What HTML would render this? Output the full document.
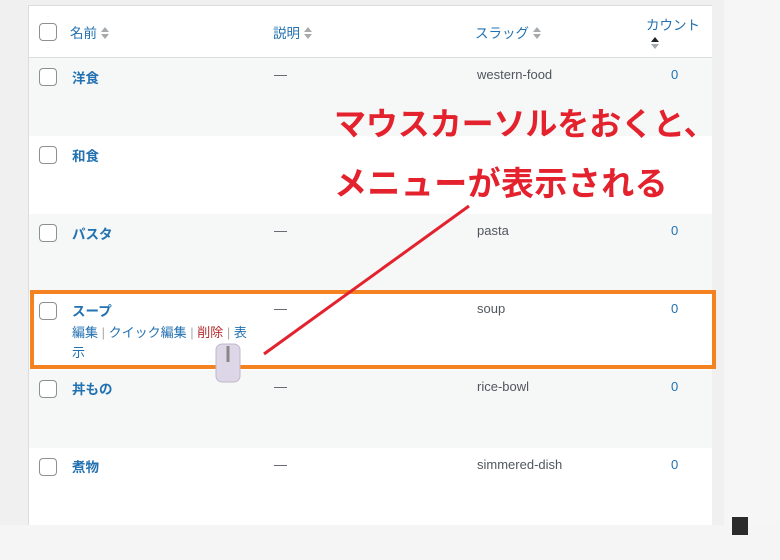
<!DOCTYPE html>
<html><head><meta charset="utf-8"><style>
body{margin:0;width:780px;height:560px;background:#f5f5f5;position:relative;overflow:hidden;font-family:"Liberation Sans","Noto Sans CJK JP",sans-serif;}
.abs{position:absolute}
.tbl{left:28px;top:5px;width:684px;height:520px;border:1px solid #dcdcde;background:#fff;box-sizing:border-box}
.row{position:absolute;left:29px;width:683px;height:78px}
.cb{position:absolute;left:10px;width:16px;height:16px;border:1px solid #8c8f94;border-radius:4px;background:#fff}
.name{position:absolute;left:43px;font-weight:bold;color:#2271b1;font-size:13.5px}
.t{position:absolute;font-size:13px;color:#50575e}
.cnt{position:absolute;left:642px;font-size:13px;color:#2271b1}
.hd{position:absolute;font-size:13.5px;color:#2271b1}
.arr{display:inline-block;margin-left:4px;vertical-align:-1px;width:8px;height:12px}
.red{color:#e3222e;font-weight:bold;white-space:nowrap}
</style></head><body>
<div class="abs" style="left:0;top:0;width:28px;height:525px;background:#f0f0f1"></div>
<div class="abs" style="left:712px;top:0;width:12px;height:525px;background:#f0f0f1"></div>
<div class="abs" style="left:724px;top:0;width:56px;height:525px;background:#f6f6f6"></div>
<div class="abs" style="left:0;top:0;width:724px;height:5px;background:#f0f0f1"></div>
<div class="abs tbl"></div>
<div class="row" style="top:6px;height:51px;background:#fff;border-bottom:1px solid #dcdcde">
 <div class="cb" style="top:17px"></div>
 <div class="hd" style="left:41px;top:16px">名前<svg class="arr" viewBox="0 0 8 12"><path d="M0 5L4 0L8 5Z M0 7L4 12L8 7Z" fill="#a7aaad"/></svg></div>
 <div class="hd" style="left:244px;top:16px">説明<svg class="arr" viewBox="0 0 8 12"><path d="M0 5L4 0L8 5Z M0 7L4 12L8 7Z" fill="#a7aaad"/></svg></div>
 <div class="hd" style="left:446px;top:16px">スラッグ<svg class="arr" viewBox="0 0 8 12"><path d="M0 5L4 0L8 5Z M0 7L4 12L8 7Z" fill="#a7aaad"/></svg></div>
 <div class="hd" style="left:617px;top:8px">カウント</div>
 <svg class="abs" style="left:622px;top:30px" width="8" height="14" viewBox="0 0 8 12"><path d="M0 5L4 0L8 5Z" fill="#1d2327"/><path d="M0 7L4 12L8 7Z" fill="#a7aaad"/></svg>
</div>
<div class="row" style="top:58px;background:#f6f7f7"><div class="cb" style="top:10px"></div><div class="name" style="top:9px">洋食</div><div class="t" style="left:245px;top:9px">—</div><div class="t" style="left:448px;top:9px">western-food</div><div class="cnt" style="top:9px">0</div></div>
<div class="row" style="top:136px;background:#fff"><div class="cb" style="top:10px"></div><div class="name" style="top:9px">和食</div></div>
<div class="row" style="top:214px;background:#f6f7f7"><div class="cb" style="top:10px"></div><div class="name" style="top:9px">パスタ</div><div class="t" style="left:245px;top:9px">—</div><div class="t" style="left:448px;top:9px">pasta</div><div class="cnt" style="top:9px">0</div></div>
<div class="row" style="top:292px;background:#fff"><div class="cb" style="top:10px"></div><div class="name" style="top:8px">スープ</div>
 <div class="t" style="left:43px;top:31px;color:#2271b1;line-height:20px;width:185px;font-size:13px">編集 <span style="color:#a7aaad">|</span> クイック編集 <span style="color:#a7aaad">|</span> <span style="color:#b32d2e">削除</span> <span style="color:#a7aaad">|</span> 表示</div>
 <div class="t" style="left:245px;top:9px">—</div><div class="t" style="left:448px;top:9px">soup</div><div class="cnt" style="top:9px">0</div></div>
<div class="row" style="top:370px;background:#f6f7f7"><div class="cb" style="top:10px"></div><div class="name" style="top:8px">丼もの</div><div class="t" style="left:245px;top:9px">—</div><div class="t" style="left:448px;top:9px">rice-bowl</div><div class="cnt" style="top:9px">0</div></div>
<div class="row" style="top:448px;background:#fff;height:77px"><div class="cb" style="top:10px"></div><div class="name" style="top:8px">煮物</div><div class="t" style="left:245px;top:9px">—</div><div class="t" style="left:448px;top:9px">simmered-dish</div><div class="cnt" style="top:9px">0</div></div>
<div class="abs" style="left:30px;top:290px;width:686px;height:79px;border:4px solid #f58220;box-sizing:border-box"></div>
<div class="abs red" style="left:334px;top:99px;font-size:32px;letter-spacing:-0.1px">マウスカーソルをおくと、</div>
<div class="abs red" style="left:334px;top:157px;font-size:33px;letter-spacing:0.4px">メニューが表示される</div>
<svg class="abs" style="left:0;top:0" width="780" height="560"><line x1="469" y1="206" x2="264" y2="354" stroke="#e3222e" stroke-width="3"/>
<rect x="216" y="344" width="24" height="38" rx="6" fill="#ddd6e6" stroke="#c0b8cc"/><line x1="228" y1="346" x2="228" y2="362" stroke="#888" stroke-width="3"/></svg>
<div class="abs" style="left:732px;top:517px;width:16px;height:18px;background:#2b2b2b"></div>
</body></html>
